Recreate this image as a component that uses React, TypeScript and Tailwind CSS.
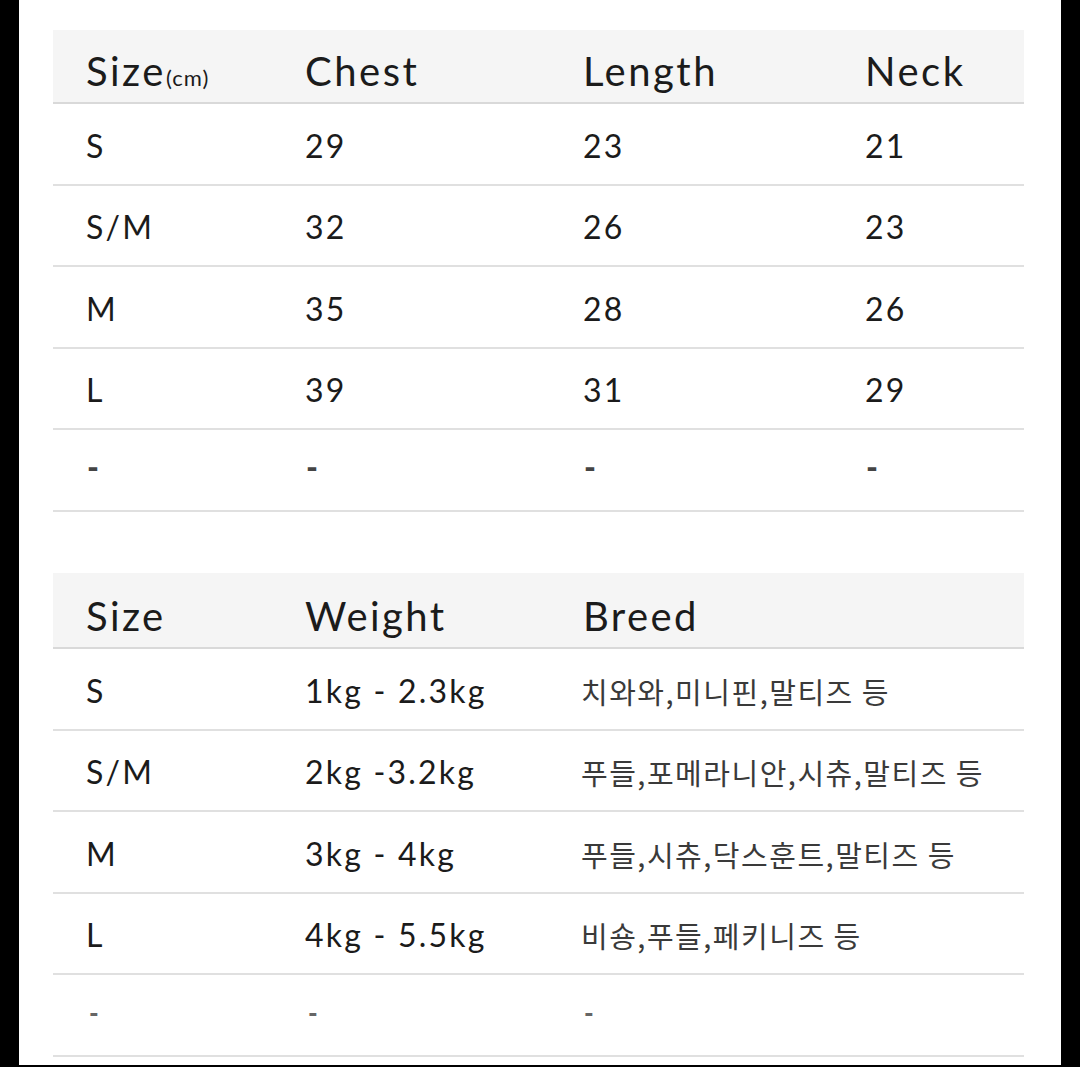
import React from 'react';

const cols = 'grid grid-cols-[219px_278px_282px_1fr]';

const sizeRows = [
  ['S', '29', '23', '21'],
  ['S/M', '32', '26', '23'],
  ['M', '35', '28', '26'],
  ['L', '39', '31', '29'],
];

const weightRows = [
  ['S', '1kg - 2.3kg', '치와와,미니핀,말티즈 등'],
  ['S/M', '2kg -3.2kg', '푸들,포메라니안,시츄,말티즈 등'],
  ['M', '3kg - 4kg', '푸들,시츄,닥스훈트,말티즈 등'],
  ['L', '4kg - 5.5kg', '비숑,푸들,페키니즈 등'],
];

const Dash = ({ small }: { small?: boolean }) => (
  <span className={small ? 'text-[26px] font-black text-[#666]' : 'text-[32px] font-black text-[#444]'}>-</span>
);

const App: React.FC = () => {
  return (
    <div className="flex h-[1067px] w-[1080px] bg-black font-['Lato','Noto_Sans_CJK_KR',sans-serif] text-[#1b1b1b]">
      <div className="w-[19px] shrink-0" />
      <div className="flex h-[1065px] flex-1 flex-col bg-white pl-[34px] pr-[37px] pt-[30px]">
        {/* measurements */}
        <div className={`${cols} h-[74px] border-b-2 border-[#d9d9d9] bg-[#f5f5f5] pt-[17px] text-[40px] leading-[48px] tracking-[2.5px]`}>
          <div className="pl-[33px]">
            Size<span className="text-[22px] tracking-[1px]">(cm)</span>
          </div>
          <div className="pl-[33px]">Chest</div>
          <div className="pl-[33px]">Length</div>
          <div className="pl-[33px]">Neck</div>
        </div>
        {sizeRows.map((r) => (
          <div key={r[0]} className={`${cols} h-[81.5px] items-center border-b-2 border-[#e0e0e0] pt-[4px] text-[32px] leading-[38px] tracking-[2.2px]`}>
            {r.map((c, i) => (
              <div key={i} className="pl-[33px]">{c}</div>
            ))}
          </div>
        ))}
        <div className={`${cols} h-[81.5px] items-center border-b-2 border-[#e0e0e0] leading-[38px]`}>
          <div className="pl-[34px]"><Dash /></div>
          <div className="pl-[34px]"><Dash /></div>
          <div className="pl-[34px]"><Dash /></div>
          <div className="pl-[34px]"><Dash /></div>
        </div>

        {/* weight / breed */}
        <div className={`${cols} mt-[61.5px] h-[76px] border-b-2 border-[#d9d9d9] bg-[#f5f5f5] pt-[19px] text-[40px] leading-[48px] tracking-[2.4px]`}>
          <div className="pl-[33px]">Size</div>
          <div className="pl-[33px]">Weight</div>
          <div className="pl-[33px]">Breed</div>
          <div />
        </div>
        {weightRows.map((r) => (
          <div key={r[0]} className={`${cols} h-[81.5px] items-center border-b-2 border-[#e0e0e0] pt-[4px] text-[32px] leading-[38px] tracking-[2.2px]`}>
            <div className="pl-[33px]">{r[0]}</div>
            <div className="pl-[33px]">{r[1]}</div>
            <div className="col-span-2 whitespace-nowrap pl-[31px] font-['Noto_Sans_CJK_KR',sans-serif] text-[29px] tracking-[1.5px] text-[#3a3a3a]">
              {r[2]}
            </div>
          </div>
        ))}
        <div className={`${cols} h-[81.5px] items-center border-b-2 border-[#e0e0e0] leading-[38px]`}>
          <div className="pl-[36px]"><Dash small /></div>
          <div className="pl-[36px]"><Dash small /></div>
          <div className="pl-[34px]"><Dash small /></div>
          <div />
        </div>
      </div>
      <div className="w-[19px] shrink-0" />
    </div>
  );
};

export default App;
